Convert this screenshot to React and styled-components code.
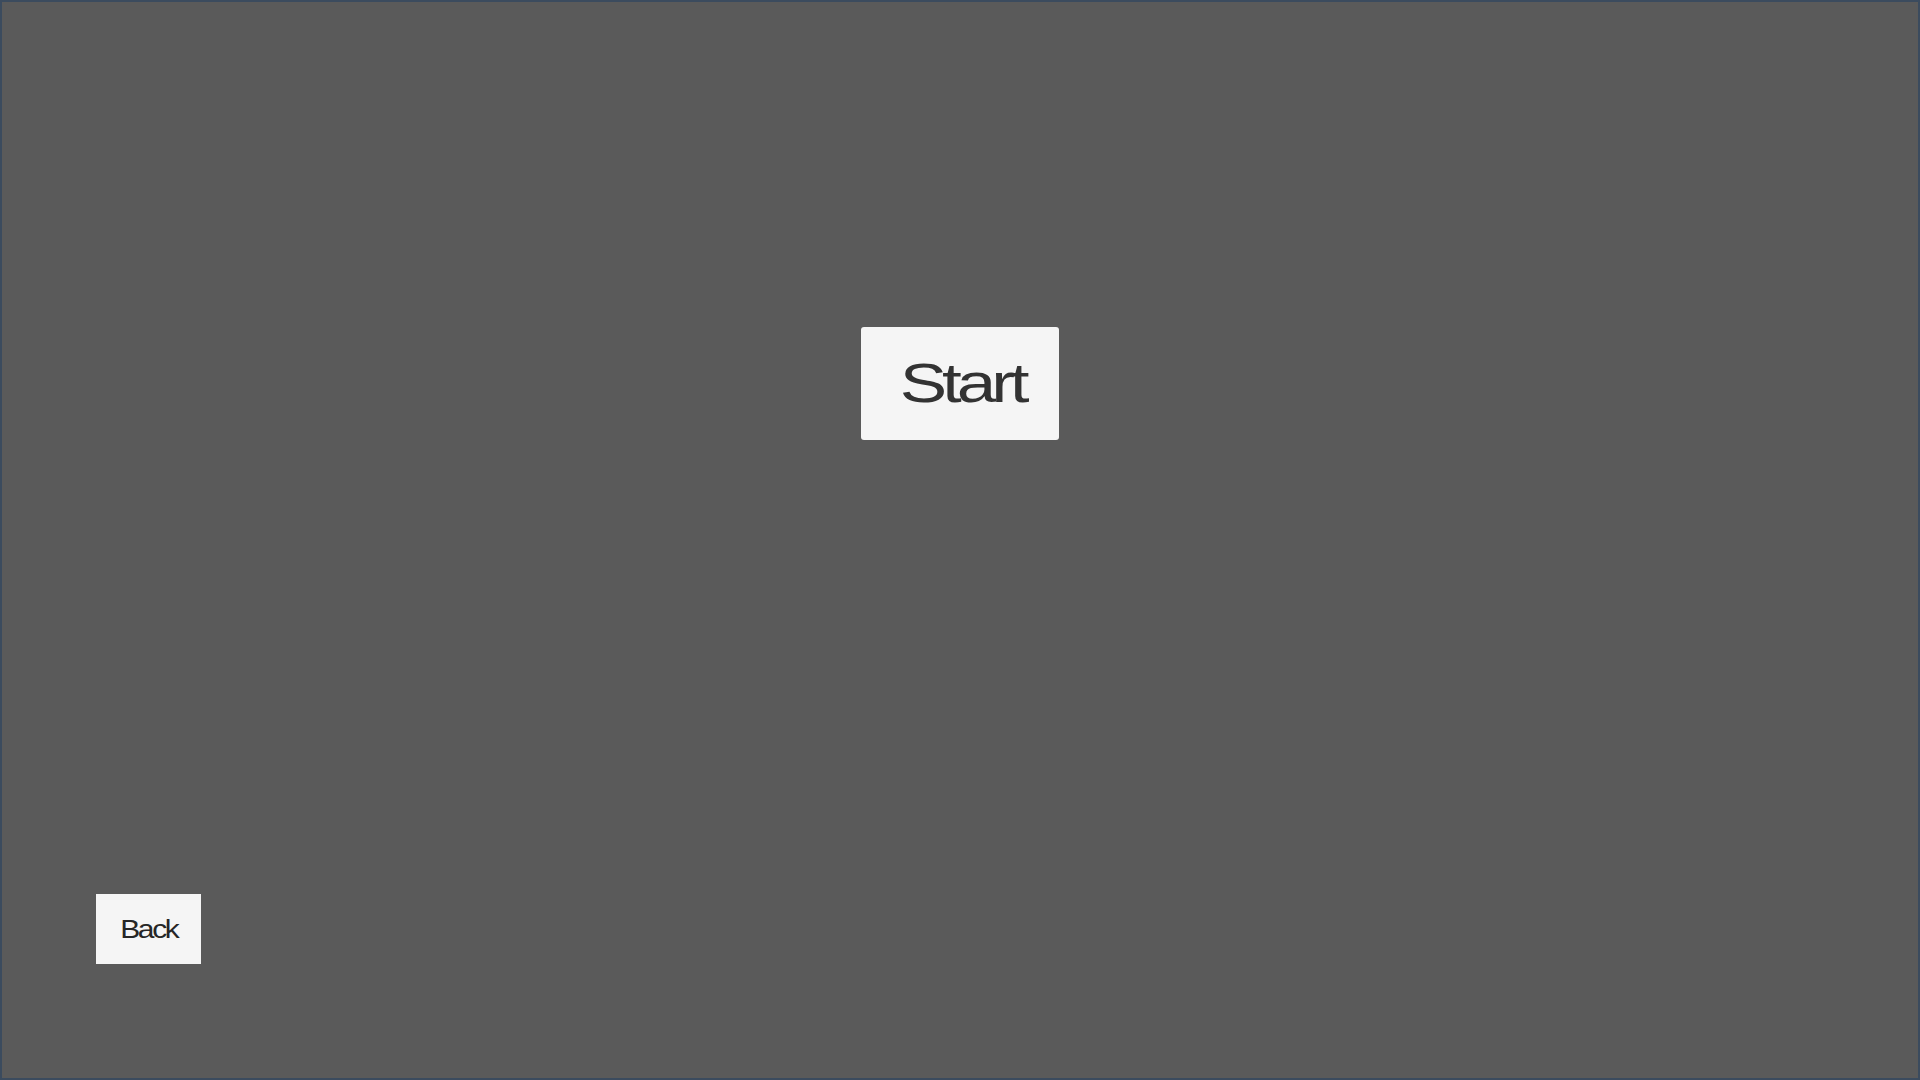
import * as React from 'react';
import styled, { createGlobalStyle } from 'styled-components';

const GlobalStyle = createGlobalStyle`
  html, body {
    margin: 0;
    padding: 0;
    background: #5a5a5a;
  }
  * {
    box-sizing: border-box;
  }
`;

const Screen = styled.div`
  width: 1920px;
  height: 1080px;
  display: flex;
  flex-direction: column;
  background: #5a5a5a;
  border: 2px solid #3b4b5e;
  padding: 325px 0 114px 94px;
  font-family: "Liberation Sans", Arial, sans-serif;
`;

const MenuButton = styled.button`
  display: flex;
  align-items: center;
  justify-content: center;
  border: none;
  background: #f5f5f5;
  font-family: inherit;
  cursor: pointer;
`;

const StartButton = styled(MenuButton)`
  align-self: center;
  margin-left: -94px;
  width: 198px;
  height: 113px;
  border-radius: 3px;
  color: #333333;
  font-size: 56px;
  padding: 0 0 2px 4px;
`;

const BackButton = styled(MenuButton)`
  margin-top: auto;
  width: 105px;
  height: 70px;
  border-radius: 0;
  color: #262626;
  font-size: 25px;
  padding: 0 0 0 1px;
`;

// the labels are drawn wide and tightly packed
const Label = styled.span`
  display: inline-block;
  letter-spacing: ${(p) => p.$spacing}px;
  transform: scaleX(${(p) => p.$stretch});
`;

const App = () => (
  <>
    <GlobalStyle />
    <Screen>
      <StartButton><Label $spacing={-4} $stretch={1.27}>Start</Label></StartButton>
      <BackButton><Label $spacing={-2} $stretch={1.2}>Back</Label></BackButton>
    </Screen>
  </>
);

export default App;
